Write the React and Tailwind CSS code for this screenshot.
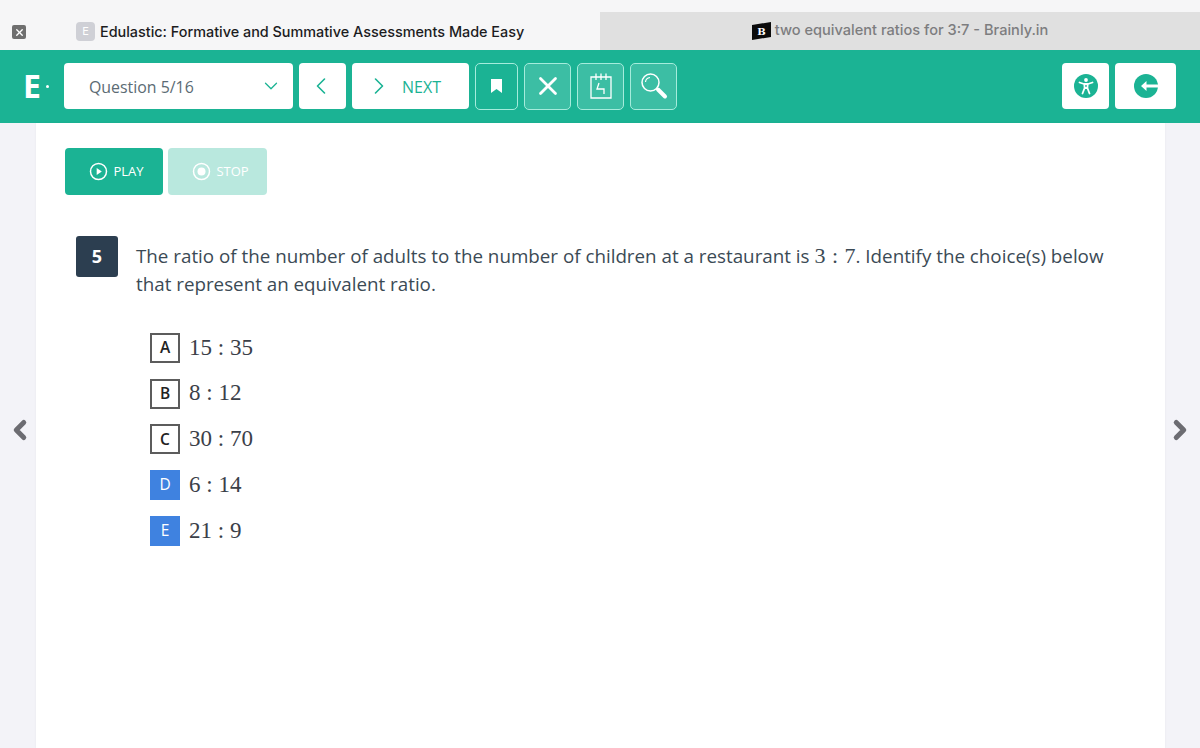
import React from 'react';
import { ChevronDown, ChevronLeft, ChevronRight, X } from 'lucide-react';

const openSans = { fontFamily: '"Open Sans", sans-serif' };

const options = [
  { label: 'A', text: '15 : 35', selected: false },
  { label: 'B', text: '8 : 12', selected: false },
  { label: 'C', text: '30 : 70', selected: false },
  { label: 'D', text: '6 : 14', selected: true },
  { label: 'E', text: '21 : 9', selected: true },
];

const ToolButton = ({ className, children }) => (
  <button className={`h-[47px] flex items-center justify-center rounded-[5px] border-[1.5px] border-[#a5ecdc] ${className}`}>
    {children}
  </button>
);

const Tabs = () => (
  <div className="h-[50px] flex bg-[#f6f6f7] font-['Inter',sans-serif]">
    <div className="w-[600px] flex items-end pb-[9px]">
      <div className="ml-3 w-[14px] h-[14px] mb-[2px] rounded-[2px] bg-[#6f6f6f] flex items-center justify-center">
        <X size={11} strokeWidth={3} className="text-white" />
      </div>
      <div className="ml-[50px] w-[19px] h-[19px] rounded-[4px] bg-[#cfd0d6] flex items-center justify-center text-[11px] text-white">E</div>
      <span className="ml-[5px] text-[14.4px] leading-[19px] font-medium text-[#1c1c1e]">
        Edulastic: Formative and Summative Assessments Made Easy
      </span>
    </div>
    <div className="flex-1 mt-3 bg-[#e0e0e0] flex items-center justify-center">
      <svg width="19" height="18" viewBox="0 0 19 18" className="mr-[4px]">
        <path d="M0 3 L19 0 V15 L0 18 Z" fill="#0b0b0b" />
        <text x="9.5" y="13" textAnchor="middle" fontSize="10" fontWeight="700" fontFamily="DejaVu Serif, serif" fill="#fff">B</text>
      </svg>
      <span className="text-[14.6px] font-medium text-[#7d7d7f]">two equivalent ratios for 3:7 - Brainly.in</span>
    </div>
  </div>
);

const Toolbar = () => (
  <div className="h-[73px] flex items-center bg-[#1bb394] pb-[1px] pr-6" style={openSans}>
    <div className="w-16 pl-[23px] flex items-center text-white">
      <span className="text-[32px] font-bold leading-none">E</span>
      <span className="ml-[5px] w-[3px] h-[3px] rounded-full bg-white" />
    </div>
    <div className="w-[229px] h-[46px] bg-white rounded-[4px] flex items-center justify-between pl-[25px] pr-[11px]">
      <span className="text-[15.9px] leading-[20px] pt-[1px] font-medium text-[#5b6b74]">Question 5/16</span>
      <ChevronDown size={22} strokeWidth={1.4} className="text-[#1bb394]" />
    </div>
    <button className="ml-[6px] w-[47px] h-[46px] bg-white rounded-[4px] flex items-center justify-center pr-[3px]">
      <ChevronLeft size={28} strokeWidth={1.4} className="text-[#1bb394]" />
    </button>
    <button className="ml-[6px] w-[117px] h-[46px] bg-white rounded-[4px] flex items-center pl-[13px]">
      <ChevronRight size={28} strokeWidth={1.4} className="text-[#1bb394]" />
      <span className="ml-[9px] text-[16px] leading-[20px] pt-[1px] text-[#1bb394]">NEXT</span>
    </button>
    <ToolButton className="ml-[6px] w-[43px]">
      <svg width="13" height="16" viewBox="0 0 13 16">
        <path d="M1 1 H12 V15 L6.5 11 L1 15 Z" fill="#fff" />
      </svg>
    </ToolButton>
    <ToolButton className="ml-[6px] w-[47px] bg-[#3cbea4]">
      <X size={30} strokeWidth={2.2} className="text-white" />
    </ToolButton>
    <ToolButton className="ml-[6px] w-[47px] bg-[#3cbea4]">
      <svg width="24" height="28" viewBox="0 0 24 28" fill="none" stroke="#fff" strokeWidth="1.3">
        <path d="M2 5 H22 V26 H2 Z" />
        <path d="M7 1.5 V8 M12 1.5 V8 M17 1.5 V8" />
        <path d="M10 11 L8 17 H15 V22" />
      </svg>
    </ToolButton>
    <ToolButton className="ml-[6px] w-[47px] bg-[#3cbea4]">
      <svg width="28" height="28" viewBox="0 0 28 28" fill="none" stroke="#fff">
        <circle cx="10.5" cy="10.5" r="8.5" strokeWidth="1.5" />
        <path d="M5.5 10 A5 5 0 0 1 10 5.5" strokeWidth="1.2" />
        <path d="M18 17.5 L25 24.5" strokeWidth="4" strokeLinecap="round" />
      </svg>
    </ToolButton>
    <button className="ml-auto w-[47px] h-[46px] bg-white rounded-[4px] flex items-center justify-center">
      <svg width="24" height="24" viewBox="0 0 24 24">
        <circle cx="12" cy="12" r="12" fill="#1bb394" />
        <circle cx="12" cy="6" r="1.9" fill="#fff" />
        <path d="M5.5 8.5 L10 10 H14 L18.5 8.5 M10.3 10 L10.6 14 L8.5 19.5 M13.7 10 L13.4 14 L15.5 19.5 M10.6 14 H13.4" fill="none" stroke="#fff" strokeWidth="1.8" strokeLinecap="round" strokeLinejoin="round" />
      </svg>
    </button>
    <button className="ml-[6px] w-[61px] h-[46px] bg-white rounded-[4px] flex items-center justify-center">
      <svg width="24" height="24" viewBox="0 0 24 24">
        <circle cx="12" cy="12" r="12" fill="#1bb394" />
        <path d="M7 12 L12.5 7 V10.5 H24 V13.5 H12.5 V17 Z" fill="#fff" />
      </svg>
    </button>
  </div>
);

export default function App() {
  return (
    <div className="w-[1200px] h-[748px] overflow-hidden relative bg-[#f3f3f8]">
      <Tabs />
      <Toolbar />
      <div className="ml-9 w-[1129px] h-[625px] bg-white shadow-[0_0_2px_rgba(0,0,0,0.06)] pt-[25px]" style={openSans}>
        <div className="flex pl-[29px] gap-[5px]">
          <button className="w-[98px] h-[47px] rounded-[4px] bg-[#1bb394] flex items-center justify-center gap-[5px] pl-[5px] text-white text-[13px] font-medium">
            <svg width="19" height="19" viewBox="0 0 19 19">
              <circle cx="9.5" cy="9.5" r="8" fill="none" stroke="#fff" strokeWidth="1.5" />
              <path d="M7.7 6 L12.8 9.5 L7.7 13 Z" fill="#fff" />
            </svg>
            PLAY
          </button>
          <button className="w-[99px] h-[47px] rounded-[4px] bg-[#b9e8de] flex items-center justify-center gap-[5px] pl-[6px] text-white text-[13px] font-medium">
            <svg width="19" height="19" viewBox="0 0 19 19">
              <circle cx="9.5" cy="9.5" r="8" fill="none" stroke="#fff" strokeWidth="1.5" />
              <circle cx="9.5" cy="9.5" r="4" fill="#fff" />
            </svg>
            STOP
          </button>
        </div>
        <div className="flex mt-[41px] pl-10">
          <div className="w-[42px] h-[41px] rounded-[3px] bg-[#2c3e50] flex items-center justify-center text-white text-[18px] font-bold shrink-0">5</div>
          <p className="ml-[18px] w-[990px] text-[18.8px] leading-[28px] text-[#3b4a55] pt-[6px]">
            The ratio of the number of adults to the number of children at a restaurant is{' '}
            <span className="font-['Liberation_Serif',serif] text-[22px] [word-spacing:1px]">3 : 7</span>
            . Identify the choice(s) below that represent an equivalent ratio.
          </p>
        </div>
        <div className="mt-[35px] pl-[114px] flex flex-col gap-[15.7px]">
          {options.map((opt) => (
            <div key={opt.label} className="flex items-center h-[30px]">
              <div
                className={`w-[30px] h-[30px] flex items-center justify-center text-[15.5px] ${
                  opt.selected ? 'bg-[#3f82e0] text-white' : 'border-2 border-[#5c5c5c] text-[#222] font-semibold'
                }`}
              >
                {opt.label}
              </div>
              <span className="ml-[9px] font-['Liberation_Serif',serif] text-[23px] text-[#3b4048]">{opt.text}</span>
            </div>
          ))}
        </div>
      </div>
      <ChevronLeft size={30} strokeWidth={4} className="absolute left-[5px] top-[415px] text-[#6c6c72]" />
      <ChevronRight size={30} strokeWidth={4} className="absolute right-[5px] top-[415px] text-[#6c6c72]" />
    </div>
  );
}
